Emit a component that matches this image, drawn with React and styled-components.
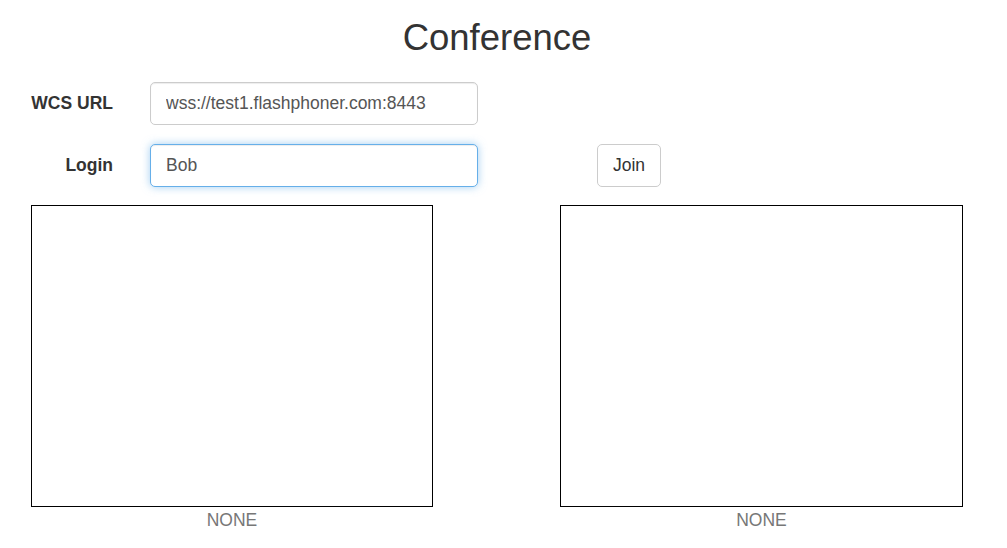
import React from "react";
import styled, { createGlobalStyle } from "styled-components";

const Global = createGlobalStyle`
  html, body { margin: 0; padding: 0; background: #fff; }
  body {
    font-family: "Liberation Sans", Arial, sans-serif;
    font-size: 17.5px;
    line-height: 1.42857;
    color: #333;
  }
  * { box-sizing: border-box; }
`;

const Page = styled.div`
  width: 1007px;
  padding-top: 18px;
`;

const Title = styled.h1`
  margin: 0 13px 0 0;
  font-size: 36.5px;
  font-weight: 400;
  line-height: 40px;
  text-align: center;
  color: #333;
`;

const Form = styled.div`
  display: flex;
  flex-direction: column;
  gap: 19.5px;
  margin-top: 24px;
`;

const Row = styled.div`
  display: flex;
  align-items: center;
  height: 42.5px;
`;

const Label = styled.label`
  width: 113px;
  flex: none;
  padding-top: 1px;
  text-align: right;
  font-weight: 700;
  color: #333;
`;

const Input = styled.input`
  margin-left: 37px;
  width: 328px;
  height: 42.5px;
  padding: 0 15px;
  font: inherit;
  color: #555;
  background: #fff;
  border: 1px solid ${(p) => (p.$focused ? "#66afe9" : "#ccc")};
  border-radius: 5px;
  outline: none;
  box-shadow: ${(p) =>
    p.$focused
      ? "inset 0 1px 1px rgba(0,0,0,.075), 0 0 8px rgba(102,175,233,.6)"
      : "inset 0 1px 1px rgba(0,0,0,.075)"};
`;

const Button = styled.button`
  margin-left: 119px;
  height: 42.5px;
  padding: 0 15px;
  font: inherit;
  color: #333;
  background: #fff;
  border: 1px solid #ccc;
  border-radius: 5px;
  cursor: pointer;
`;

const Videos = styled.div`
  display: flex;
  margin-top: 18.5px;
  padding-left: 31px;
  gap: 127px;
`;

const VideoCol = styled.div`
  display: flex;
  flex-direction: column;
  align-items: center;
`;

const Display = styled.div`
  width: ${(p) => p.$w}px;
  height: 302px;
  border: 1px solid #000;
  background: #fff;
`;

const Status = styled.div`
  color: #777;
  text-align: center;
  line-height: 26px;
`;

export default function App() {
  return (
    <Page>
      <Global />
      <Title>Conference</Title>
      <Form>
        <Row>
          <Label>WCS URL</Label>
          <Input defaultValue="wss://test1.flashphoner.com:8443" readOnly />
        </Row>
        <Row>
          <Label>Login</Label>
          <Input $focused defaultValue="Bob" readOnly />
          <Button>Join</Button>
        </Row>
      </Form>
      <Videos>
        <VideoCol>
          <Display $w={402} />
          <Status>NONE</Status>
        </VideoCol>
        <VideoCol>
          <Display $w={403} />
          <Status>NONE</Status>
        </VideoCol>
      </Videos>
    </Page>
  );
}
